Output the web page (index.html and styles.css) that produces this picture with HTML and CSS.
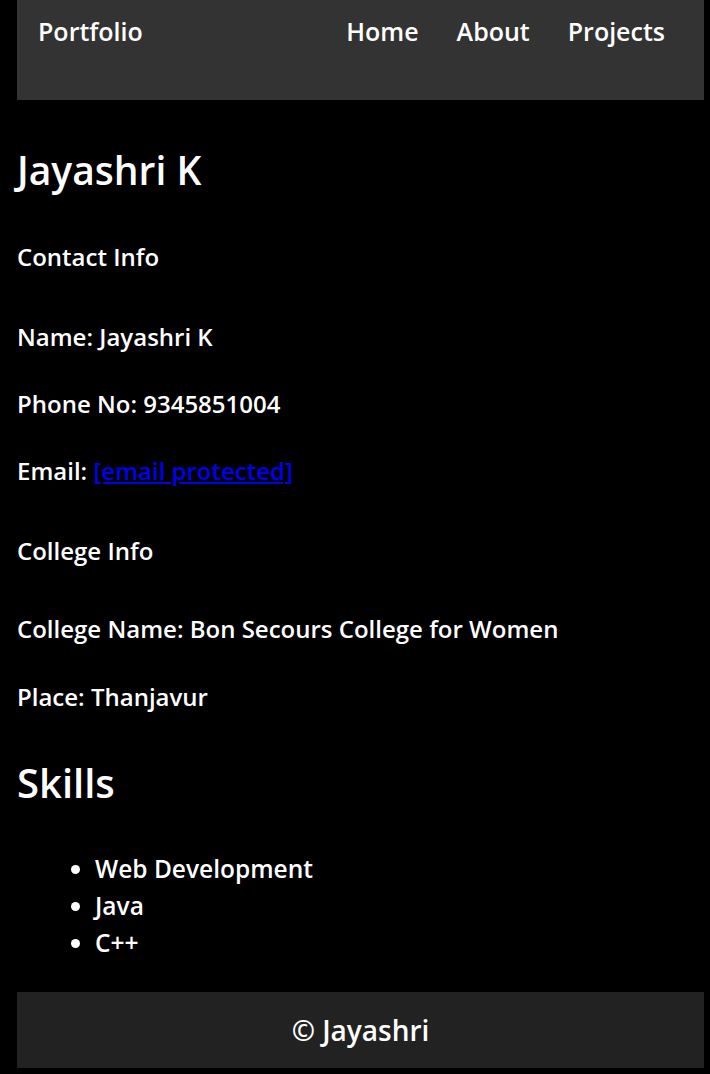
FILE: index.html
```html
<!DOCTYPE html>
<html lang="en">
<head>
<meta charset="utf-8">
<title>Portfolio</title>
<link rel="stylesheet" href="styles.css">
</head>
<body>
<header class="site-header">
  <div class="brand">Portfolio</div>
  <nav class="nav">
    <a class="nav-link" href="#">Home</a>
    <a class="nav-link" href="#">About</a>
    <a class="nav-link" href="#">Projects</a>
  </nav>
</header>
<main class="content">
  <h1 class="name-title">Jayashri K</h1>
  <h3 class="section-title">Contact Info</h3>
  <p class="info first">Name: Jayashri K</p>
  <p class="info">Phone No: 9345851004</p>
  <p class="info">Email: <a class="email-link" href="#">[email&#160;protected]</a></p>
  <h3 class="section-title">College Info</h3>
  <p class="info first compact">College Name: Bon Secours College for Women</p>
  <p class="info wide">Place: Thanjavur</p>
  <h2 class="skills-title">Skills</h2>
  <ul class="skills">
    <li>Web Development</li>
    <li>Java</li>
    <li>C++</li>
  </ul>
</main>
<footer class="site-footer">© Jayashri</footer>
</body>
</html>
```

FILE: styles.css
```css
html, body {
  background: #000;
}
body {
  margin: 0;
  padding: 0 6px 6px 17px;
  color: #fff;
  font-family: "Open Sans", "DejaVu Sans", sans-serif;
  font-weight: 600;
}
.site-header {
  background: #333;
  height: 100px;
  box-sizing: border-box;
  display: flex;
  justify-content: space-between;
  align-items: flex-start;
  padding: 13px 39px 0 21px;
  font-size: 25px;
  line-height: 36px;
}
.nav {
  display: flex;
  gap: 38px;
}
.nav-link {
  color: #fff;
  text-decoration: none;
}
.content {
  padding-top: 48px;
}
.name-title {
  margin: 0;
  font-size: 39px;
  line-height: 44px;
  font-weight: 600;
}
.section-title {
  margin: 50px 0 0;
  font-size: 24px;
  line-height: 30px;
  font-weight: 600;
}
.info {
  margin: 37px 0 0;
  font-size: 24px;
  line-height: 30px;
}
.info.wide {
  margin-top: 38px;
}
.info.first {
  margin-top: 50px;
}
.info.first.compact {
  margin-top: 48px;
}
.email-link {
  color: #0000ee;
}
.skills-title {
  margin: 48px 0 0;
  font-size: 40px;
  line-height: 46px;
  font-weight: 600;
}
.skills {
  margin: 44px 0 0;
  padding-left: 78px;
  font-size: 24.5px;
  line-height: 37px;
}
.site-footer {
  margin-top: 31px;
  background: #222;
  height: 76px;
  display: flex;
  align-items: center;
  justify-content: center;
  font-size: 28px;
}
```
